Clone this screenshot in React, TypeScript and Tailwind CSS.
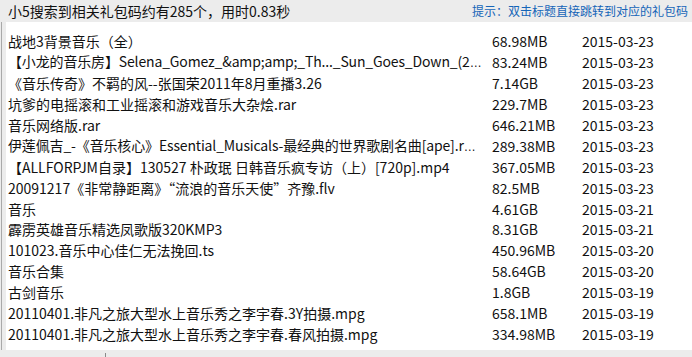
import React from 'react';

const rows = [
    { name: "战地3背景音乐（全）", size: "68.98MB", date: "2015-03-23" },
    { name: "【小龙的音乐房】Selena_Gomez_&amp;amp;_Th..._Sun_Goes_Down_(2", cut: true, size: "83.24MB", date: "2015-03-23" },
    { name: "《音乐传奇》不羁的风--张国荣2011年8月重播3.26", size: "7.14GB", date: "2015-03-23" },
    { name: "坑爹的电摇滚和工业摇滚和游戏音乐大杂烩.rar", size: "229.7MB", date: "2015-03-23" },
    { name: "音乐网络版.rar", size: "646.21MB", date: "2015-03-23" },
    { name: "伊莲佩吉_-《音乐核心》Essential_Musicals-最经典的世界歌剧名曲[ape].r", cut: true, size: "289.38MB", date: "2015-03-23" },
    { name: "【ALLFORPJM自录】130527 朴政珉 日韩音乐疯专访（上）[720p].mp4", size: "367.05MB", date: "2015-03-23" },
    { name: "20091217《非常静距离》“流浪的音乐天使”齐豫.flv", size: "82.5MB", date: "2015-03-23" },
    { name: "音乐", size: "4.61GB", date: "2015-03-21" },
    { name: "霹雳英雄音乐精选凤歌版320KMP3", size: "8.31GB", date: "2015-03-21" },
    { name: "101023.音乐中心佳仁无法挽回.ts", size: "450.96MB", date: "2015-03-20" },
    { name: "音乐合集", size: "58.64GB", date: "2015-03-20" },
    { name: "古剑音乐", size: "1.8GB", date: "2015-03-19" },
    { name: "20110401.非凡之旅大型水上音乐秀之李宇春.3Y拍摄.mpg", size: "658.1MB", date: "2015-03-19" },
    { name: "20110401.非凡之旅大型水上音乐秀之李宇春.春风拍摄.mpg", size: "334.98MB", date: "2015-03-19" },
];

export default function App() {
    return (
        <div className="w-[692px] h-[357px] bg-[#ececec] flex flex-col overflow-hidden font-['Noto_Sans_CJK_SC',sans-serif] text-[#111]">
            {/* Result summary bar */}
            <div className="h-[22px] shrink-0 flex items-center justify-between pl-[8px] pr-[4px]">
                <span className="text-[14px] leading-[20px]">小5搜索到相关礼包码约有285个，用时0.83秒</span>
                <span className="text-[12px] leading-[20px] text-[#1565b8]">提示：双击标题直接跳转到对应的礼包码</span>
            </div>

            {/* Result list */}
            <div className="h-[328px] shrink-0 flex">
                <div className="w-[1px] ml-[1px] bg-[#a9a9a9]" />
                <div className="flex-1 ml-[4px] bg-white pt-[9px]">
                    {rows.map((row) => (
                        <div key={row.name} className="h-[20.9px] flex items-center text-[14px] leading-[20px] whitespace-nowrap">
                            <div className={row.cut ? "w-[486px] pl-[2px] tracking-[-0.15px]" : "w-[486px] pl-[2px] overflow-hidden"}>
                                {row.name}
                                {row.cut && <span className="font-['Liberation_Sans',sans-serif] text-[12px] tracking-normal">…</span>}
                            </div>
                            <div className="w-[90px]">{row.size}</div>
                            <div>{row.date}</div>
                        </div>
                    ))}
                </div>
            </div>

            <div className="flex-1 relative">
                <div className="absolute left-[105px] top-[3px] bottom-0 w-[1px] bg-[#8a8a8a]" />
            </div>
        </div>
    );
}
